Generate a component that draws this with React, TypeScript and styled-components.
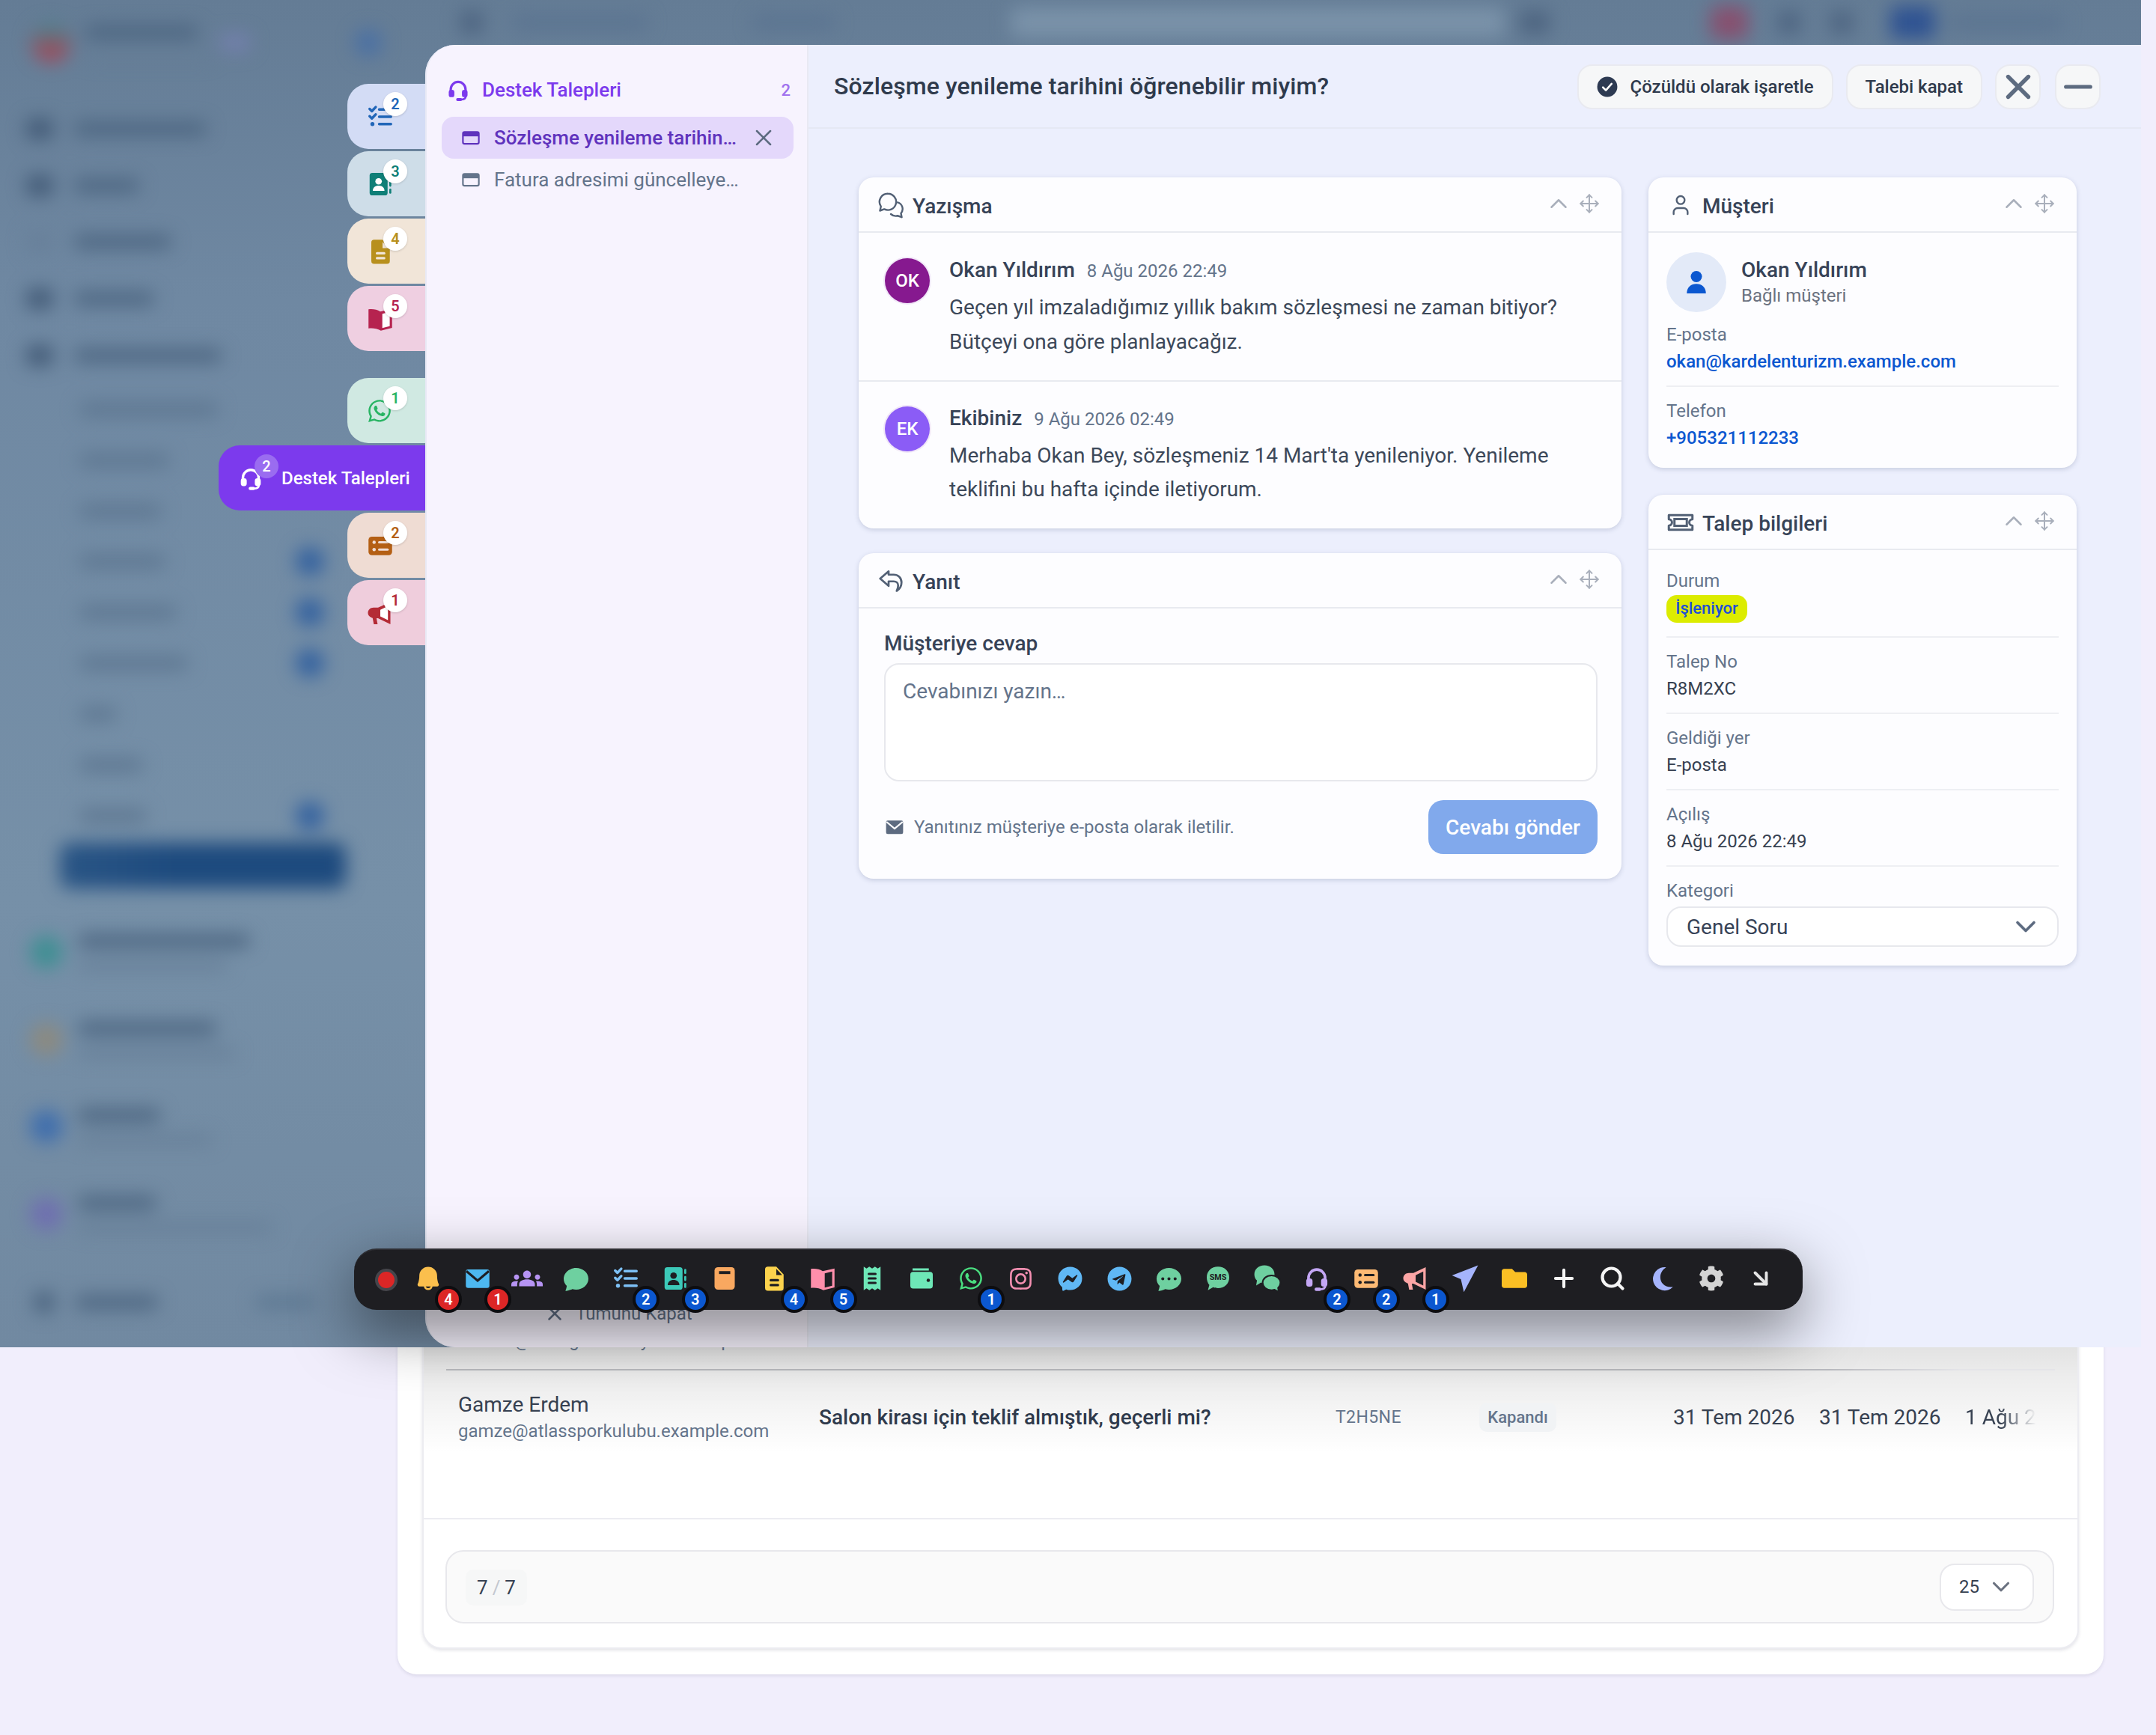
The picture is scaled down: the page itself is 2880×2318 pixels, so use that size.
import React from "react";
import styled, { createGlobalStyle } from "styled-components";
import { ChevronUp, ChevronDown, Move, X, Minus, Plus, Search, ArrowDownRight, User } from "lucide-react";
import { FaWhatsapp, FaInstagram, FaFacebookMessenger, FaTelegram, FaCog, FaFolder } from "react-icons/fa";
import { BsChatFill, BsChatDotsFill } from "react-icons/bs";
import { MdGroups } from "react-icons/md";
import { PiBellFill } from "react-icons/pi";

const GlobalStyle = createGlobalStyle`
  html, body { margin: 0; padding: 0; background: #f1eefc; }
  body { font-family: Roboto, "Liberation Sans", sans-serif; color: #2f3a4c; }
  * { box-sizing: border-box; }
`;

type IconProps = { size?: number; color?: string; cut?: string };

const Svg = ({ size = 36, color = "currentColor", children }: IconProps & { children: React.ReactNode }) => (
  <svg width={size} height={size} viewBox="0 0 24 24" fill={color} style={{ display: "block", flex: "none" }}>
    {children}
  </svg>
);

const HeadsetIcon = ({ size, color = "currentColor" }: IconProps) => (
  <Svg size={size} color={color}>
    <path d="M4.6 14v-2.5a7.4 7.4 0 0 1 14.8 0V14" fill="none" stroke={color} strokeWidth="2.4" />
    <rect x="2.6" y="12" width="5.6" height="7.4" rx="2.4" />
    <rect x="15.8" y="12" width="5.6" height="7.4" rx="2.4" />
    <path d="M19.6 18.5c0 2.4-2 3.2-5 3.2" fill="none" stroke={color} strokeWidth="1.9" />
    <rect x="10" y="20.2" width="6" height="3" rx="1.5" />
  </Svg>
);

const ChecklistIcon = ({ size, color = "currentColor" }: IconProps) => (
  <Svg size={size} color={color}>
    <g fill="none" stroke={color} strokeWidth="2.3" strokeLinecap="round" strokeLinejoin="round">
      <path d="M11 5.5h10.5M11 12h10.5M11 18.5h10.5" />
      <path d="M2.5 5l2 2 3.4-3.6M2.5 11.5l2 2 3.4-3.6" />
    </g>
    <circle cx="5" cy="18.5" r="1.8" />
  </Svg>
);

const ContactsIcon = ({ size, color = "currentColor", cut = "#fff" }: IconProps) => (
  <Svg size={size} color={color}>
    <rect x="2.5" y="2" width="16" height="20" rx="2.4" />
    <rect x="20" y="3.5" width="1.8" height="4.5" rx=".9" />
    <rect x="20" y="9.8" width="1.8" height="4.5" rx=".9" />
    <rect x="20" y="16" width="1.8" height="4.5" rx=".9" />
    <circle cx="10.5" cy="9.5" r="2.9" fill={cut} />
    <path d="M5.3 18c0-3 2.3-4.6 5.2-4.6s5.2 1.6 5.2 4.6z" fill={cut} />
  </Svg>
);

const BoxIcon = ({ size, color = "currentColor", cut = "#fff" }: IconProps) => (
  <Svg size={size} color={color}>
    <rect x="3" y="2" width="18" height="20" rx="3" />
    <rect x="7" y="5.5" width="10" height="2.6" fill={cut} />
  </Svg>
);

const DocIcon = ({ size, color = "currentColor", cut = "#fff" }: IconProps) => (
  <Svg size={size} color={color}>
    <path d="M6.5 1.5H14l6.5 7v12a2.500 2.500 0 0 1-2.500 2.500H6.5A2.500 2.500 0 0 1 4 20.500V4a2.500 2.500 0 0 1 2.500-2.500z" />
    <path d="M14 3.500v5.500h5.200z" fill={cut} />
    <rect x="8" y="12.500" width="8.500" height="2.200" rx="1" fill={cut} />
    <rect x="8" y="16.800" width="8.500" height="2.200" rx="1" fill={cut} />
  </Svg>
);

const BookIcon = ({ size, color = "currentColor", cut = "#fff" }: IconProps) => (
  <Svg size={size} color={color}>
    <path d="M1.500 3.500C5 3 9 3.500 12 5.500l10.500-2.300V20L12.500 22.500C9 20.500 5 20 1.500 20.500z" />
    <path d="M13.800 7.500l6.600-1.600v12.600l-6.600 1.700z" fill={cut} />
  </Svg>
);

const ReceiptIcon = ({ size, color = "currentColor", cut = "#fff" }: IconProps) => (
  <Svg size={size} color={color}>
    <path d="M4.500 1.500l2.500 1.700 2.500-1.700 2.500 1.700 2.500-1.700 2.500 1.700 2.500-1.700v21l-2.500-1.700-2.500 1.700-2.500-1.700-2.500 1.700L7 20.800l-2.500 1.700z" />
    <rect x="8" y="7" width="8" height="2" rx="1" fill={cut} />
    <rect x="8" y="11" width="8" height="2" rx="1" fill={cut} />
    <rect x="8" y="15" width="8" height="2" rx="1" fill={cut} />
  </Svg>
);

const WalletIcon = ({ size, color = "currentColor", cut = "#fff" }: IconProps) => (
  <Svg size={size} color={color}>
    <path d="M4 3h14.500v2H4z" />
    <rect x="2" y="6.200" width="20" height="14.800" rx="2.500" />
    <circle cx="18" cy="13.600" r="1.500" fill={cut} />
  </Svg>
);

const MailIcon = ({ size, color = "currentColor", cut = "#fff" }: IconProps) => (
  <Svg size={size} color={color}>
    <rect x="1.500" y="4" width="21" height="16.500" rx="2" />
    <path d="M2 5.500l10 8.500 10-8.500" fill="none" stroke={cut} strokeWidth="2" />
  </Svg>
);

const SmsIcon = ({ size, color = "currentColor", cut = "#fff" }: IconProps) => (
  <Svg size={size} color={color}>
    <path d="M12 1.500c5.800 0 10 4 10 9.600s-4.200 9.600-10 9.600c-1.500 0-3-.3-4.300-.8L3 22.500l1.300-4.600C2.900 16 2 13.700 2 11.100 2 5.500 6.200 1.500 12 1.500z" />
    <text x="12" y="13.600" textAnchor="middle" fontSize="7.200" fontWeight="700" fontFamily="Roboto, sans-serif" fill={cut}>SMS</text>
  </Svg>
);

const ChatsIcon = ({ size, color = "currentColor", cut = "#fff" }: IconProps) => (
  <Svg size={size} color={color}>
    <path d="M9.500 1C14.500 1 18 4.200 18 8.500S14.500 16 9.500 16c-1 0-2-.1-2.900-.5L2.500 18l.7-4.200C1.800 12.500 1 10.600 1 8.500 1 4.200 4.500 1 9.500 1z" />
    <path d="M15.500 9.500c4.300 0 7.500 2.700 7.500 6.200 0 1.800-.8 3.300-2 4.400l.7 3.400-3.700-2c-.8.200-1.600.4-2.500.4-4.300 0-7.500-2.700-7.500-6.200s3.200-6.200 7.500-6.200z" stroke={cut} strokeWidth="1.300" />
  </Svg>
);

const ListCardIcon = ({ size, color = "currentColor", cut = "#fff" }: IconProps) => (
  <Svg size={size} color={color}>
    <rect x="1.500" y="4" width="21" height="16.500" rx="3" />
    <circle cx="6.500" cy="9" r="1.500" fill={cut} />
    <circle cx="6.500" cy="15.500" r="1.500" fill={cut} />
    <rect x="10" y="8" width="9.500" height="2" rx="1" fill={cut} />
    <rect x="10" y="14.500" width="9.500" height="2" rx="1" fill={cut} />
  </Svg>
);

const MegaphoneIcon = ({ size, color = "currentColor", cut = "#fff" }: IconProps) => (
  <Svg size={size} color={color}>
    <path d="M10 7.200L21 2v20l-11-5.300H8.600L9.600 22H6.200l-1-5.500C2.800 15.800 1 14.200 1 11.900c0-2.800 2.300-4.700 5-4.700z" />
    <path d="M12 9.200l6.800-3.400v12.600L12 15z" fill={cut} />
  </Svg>
);

const SendIcon = ({ size, color = "currentColor" }: IconProps) => (
  <Svg size={size} color={color}>
    <path d="M23 1L1 9.500l7.500 3.200L11 23.500z" />
  </Svg>
);

const MoonIcon = ({ size, color = "currentColor" }: IconProps) => (
  <Svg size={size} color={color}>
    <path d="M16 1.500A11 11 0 1 0 22.500 20C15 21 10.500 16.500 10.500 11c0-4 2-7.500 5.500-9.500z" />
  </Svg>
);

const WindowIcon = ({ color = "currentColor" }: IconProps) => (
  <Svg size={26} color={color}>
    <rect x="2.200" y="5" width="19.600" height="14.500" rx="2" fill="none" stroke={color} strokeWidth="2" />
    <rect x="2.200" y="5.500" width="19.600" height="4.800" />
  </Svg>
);

const CheckCircleIcon = () => (
  <Svg size={28} color="#2d3a52">
    <circle cx="12" cy="12" r="11.500" />
    <path d="M7 12.500l3.400 3.500L17 8.500" fill="none" stroke="#fff" strokeWidth="2.200" strokeLinecap="round" strokeLinejoin="round" />
  </Svg>
);

const PersonFillIcon = () => (
  <Svg size={36} color="#0b57d0">
    <circle cx="12" cy="7" r="5" />
    <path d="M3.500 22c0-5.500 3.800-8.500 8.500-8.500s8.500 3 8.500 8.500z" />
  </Svg>
);

const TicketOutlineIcon = () => (
  <Svg size={36} color="#526075">
    <g fill="none" stroke="#526075" strokeWidth="2">
      <path d="M1.500 5.500h21v3.700a2.800 2.800 0 0 0 0 5.600v3.700h-21v-3.700a2.800 2.800 0 0 0 0-5.600z" strokeLinejoin="round" />
      <rect x="6.500" y="9" width="11" height="6" />
    </g>
  </Svg>
);

const ChatsOutlineIcon = () => (
  <Svg size={36} color="#526075">
    <g fill="none" stroke="#526075" strokeWidth="1.600" strokeLinejoin="round" strokeLinecap="round">
      <path d="M9.500 1.800a7.300 7.300 0 1 1-3.400 13.800L2.300 17l.9-3.800A7.300 7.300 0 0 1 9.500 1.800z" />
      <path d="M18 9.600a6 6 0 0 1 3 9.700l.7 3.500-3.700-1.300a6.500 6.500 0 0 1-6-1.500" />
    </g>
  </Svg>
);

const ReplyOutlineIcon = () => (
  <Svg size={36} color="#526075">
    <path
      d="M10 3.500L2.500 10l7.500 6.500v-4h4.500c2.500 0 4 1.500 4 3.700 0 1.300-.4 3-1.300 4.800 3.300-2 4.300-5 4.300-7.500 0-4.500-3.200-7-7-7H10z"
      fill="none"
      stroke="#526075"
      strokeWidth="1.800"
      strokeLinejoin="round"
    />
  </Svg>
);

/* page under the modal */
const Page = styled.div`
  position: relative;
  width: 2880px;
  height: 2318px;
  overflow: hidden;
  background: #f1eefc;
  display: flex;
  flex-direction: column;
  justify-content: flex-end;
  padding: 0 70px 81px 531px;
`;

const OuterCard = styled.section`
  background: #fff;
  border-radius: 0 0 26px 26px;
  padding: 0 33px 34px;
  box-shadow: 0 2px 4px rgba(60, 60, 90, 0.12);
`;

const InnerCard = styled.div`
  background: #fff;
  border: 2px solid #ececf1;
  border-top: 0;
  border-radius: 0 0 26px 26px;
  padding-bottom: 32px;
  box-shadow: 0 2px 4px rgba(60, 60, 90, 0.14);
`;

const TableArea = styled.div`
  background: linear-gradient(180deg, rgba(0, 0, 0, 0.14) 0, rgba(0, 0, 0, 0.07) 70px, rgba(0, 0, 0, 0) 170px);
  border-bottom: 2px solid #ececf1;
`;

const PrevRow = styled.div`
  height: 60px;
  margin: 0 30px;
  padding: 6px 17px 0;
  border-bottom: 2px solid;
  border-image: linear-gradient(90deg, #b9babf 0, #b9babf 86%, #e4e4e8 94%) 1;
  font-size: 24px;
  line-height: 28px;
  color: #64748b;
`;

const TicketRow = styled.div`
  height: 197px;
  padding-left: 46px;
  padding-bottom: 72px;
  display: grid;
  grid-template-columns: 482px 690px 192px 259px 195px 195px 95px;
  align-items: center;
`;

const CustomerCell = styled.div`
  display: flex;
  flex-direction: column;
  gap: 2px;
`;

const CustomerName = styled.span`
  font-size: 28px;
  line-height: 34px;
  color: #374151;
`;

const CustomerMail = styled.span`
  font-size: 24px;
  line-height: 32px;
  color: #64748b;
`;

const SubjectCell = styled.span`
  font-size: 28px;
  font-weight: 500;
  color: #2f3a4c;
`;

const CodeCell = styled.span`
  font-size: 23px;
  letter-spacing: 0.4px;
  color: #64748b;
`;

const ClosedPill = styled.span`
  justify-self: start;
  padding: 0 10px;
  height: 39px;
  width: 103px;
  display: flex;
  align-items: center;
  justify-content: center;
  background: #f1f3f5;
  border-radius: 10px;
  font-size: 22px;
  font-weight: 500;
  color: #64748b;
`;

const DateCell = styled.span<{ $fade?: boolean }>`
  font-size: 28px;
  color: #374151;
  white-space: nowrap;
  overflow: hidden;
  ${(p) => p.$fade && "mask-image: linear-gradient(90deg, #000 50%, transparent 100%);"}
`;

const PagerBar = styled.div`
  margin: 41px 31px 0 29px;
  height: 98px;
  padding: 2px 25px 0 25px;
  background: #fafafa;
  border: 2px solid #e8e8ec;
  border-radius: 24px;
  display: flex;
  align-items: center;
  justify-content: space-between;
`;

const PageCount = styled.div`
  height: 48px;
  width: 82px;
  background: #f6f7f7;
  border-radius: 10px;
  display: flex;
  align-items: center;
  justify-content: center;
  gap: 6px;
  font-size: 26px;
  color: #374151;
`;

const PageSep = styled.span`
  color: #c3c7cf;
`;

const PageSize = styled.div`
  width: 126px;
  height: 63px;
  margin-top: -2px;
  background: #fff;
  border: 2px solid #e8e8ec;
  border-radius: 20px;
  display: flex;
  align-items: center;
  gap: 10px;
  padding-left: 24px;
  font-size: 24px;
  color: #374151;
  svg { color: #6b7280; }
`;

/* blurred backdrop */
const Overlay = styled.div`
  position: absolute;
  left: 0;
  top: 0;
  width: 2860px;
  height: 1800px;
  overflow: hidden;
  background: linear-gradient(180deg, #647c95 0, #6f88a2 400px, #7690a8 1200px, #7189a1 1800px);
`;

const BlurLayer = styled.div`
  position: absolute;
  inset: 0;
  filter: blur(12px);
  display: flex;
`;

const BlurSidebar = styled.div`
  width: 500px;
  flex: none;
  padding: 22px 30px 0 0;
  display: flex;
  flex-direction: column;
`;

const BlurRow = styled.div<{ $h: number; $top?: number; $indent?: number }>`
  height: ${(p) => p.$h}px;
  margin-top: ${(p) => p.$top ?? 0}px;
  padding-left: ${(p) => p.$indent ?? 35}px;
  display: flex;
  align-items: center;
  position: relative;
`;

const BlurBar = styled.div<{ $w: number; $ml?: number; $c?: string; $h?: number }>`
  width: ${(p) => p.$w}px;
  height: ${(p) => p.$h ?? 18}px;
  margin-left: ${(p) => p.$ml ?? 0}px;
  border-radius: 8px;
  background: ${(p) => p.$c ?? "#4c6580"};
  flex: none;
`;

const BlurDot = styled.div<{ $s: number; $c: string; $ml?: number }>`
  width: ${(p) => p.$s}px;
  height: ${(p) => p.$s}px;
  margin-left: ${(p) => p.$ml ?? 0}px;
  border-radius: 50%;
  background: ${(p) => p.$c};
  flex: none;
`;

const BlurLines = styled.div`
  display: flex;
  flex-direction: column;
  gap: 18px;
  margin-left: 20px;
`;

const ActiveBar = styled.div`
  height: 62px;
  width: 382px;
  margin: 2px 0 0 80px;
  border-radius: 14px;
  background: linear-gradient(90deg, #2a5585 0, #1d4a7e 40%);
`;

const BlurTop = styled.div`
  flex: 1;
  height: 60px;
  display: flex;
  align-items: center;
`;

/* modal */
const Modal = styled.div`
  position: absolute;
  left: 568px;
  top: 60px;
  width: 2292px;
  height: 1740px;
  border-radius: 40px 0 0 40px;
  display: flex;
  background: #eceffd;
`;

const TabStack = styled.nav`
  position: absolute;
  right: 100%;
  top: 52px;
  display: flex;
  flex-direction: column;
  align-items: flex-end;
`;

const SideTab = styled.div<{ $bg: string; $fg: string; $gap?: boolean }>`
  position: relative;
  width: 104px;
  height: 87px;
  margin-bottom: ${(p) => (p.$gap ? 36 : 3)}px;
  padding-left: 26px;
  border-radius: 28px 0 0 28px;
  background: ${(p) => p.$bg};
  color: ${(p) => p.$fg};
  display: flex;
  align-items: center;
`;

const TabBadge = styled.span`
  position: absolute;
  left: 48px;
  top: 11px;
  width: 32px;
  height: 32px;
  border-radius: 50%;
  background: #fff;
  box-shadow: 0 1px 3px rgba(0, 0, 0, 0.15);
  display: flex;
  align-items: center;
  justify-content: center;
  font-size: 20px;
  font-weight: 600;
  color: inherit;
`;

const ActiveTab = styled.div`
  position: relative;
  width: 276px;
  height: 87px;
  margin-bottom: 3px;
  padding-left: 26px;
  border-radius: 28px 0 0 28px;
  background: #7c3aed;
  color: #fff;
  display: flex;
  align-items: center;
  gap: 24px;
  font-size: 24px;
  font-weight: 500;
  white-space: nowrap;
`;

const ActiveBadge = styled.span`
  position: absolute;
  left: 48px;
  top: 12px;
  width: 32px;
  height: 32px;
  border-radius: 50%;
  background: #9a6cf0;
  display: flex;
  align-items: center;
  justify-content: center;
  font-size: 20px;
  font-weight: 500;
`;

const LeftPane = styled.aside`
  width: 512px;
  flex: none;
  background: #f7f3fe;
  border-left: 2px solid #e8e9f5;
  border-right: 2px solid #e9e9f3;
  border-radius: 40px 0 0 40px;
  padding: 42px 18px 30px 20px;
  display: flex;
  flex-direction: column;
`;

const PaneHeader = styled.div`
  display: flex;
  align-items: center;
  padding: 0 4px 0 6px;
  height: 32px;
  margin-top: 2px;
  margin-bottom: 20px;
  color: #7c3aed;
  font-size: 26px;
  font-weight: 500;
  gap: 16px;
`;

const PaneCount = styled.span`
  margin-left: auto;
  font-size: 22px;
  color: #a071ee;
`;

const PaneItem = styled.div<{ $active?: boolean }>`
  height: 56px;
  display: flex;
  align-items: center;
  gap: 18px;
  padding: 0 22px 0 26px;
  border-radius: 16px;
  font-size: 26px;
  white-space: nowrap;
  background: ${(p) => (p.$active ? "#e4d8fb" : "transparent")};
  color: ${(p) => (p.$active ? "#5f33bd" : "#64748b")};
  font-weight: ${(p) => (p.$active ? 500 : 400)};
`;

const CloseMark = styled.span`
  margin-left: auto;
  color: #5d6b80;
  display: flex;
`;

const CloseAll = styled.div`
  margin-top: auto;
  display: flex;
  align-items: center;
  gap: 13px;
  padding-left: 136px;
  font-size: 24px;
  color: #64748b;
`;

const RightPane = styled.main`
  flex: 1;
  display: flex;
  flex-direction: column;
`;

const TopBar = styled.header`
  height: 112px;
  flex: none;
  border-bottom: 2px solid #e5e8f4;
  padding: 26px 54px 0 34px;
  display: flex;
  align-items: flex-start;
  gap: 17px;
`;

const TicketTitle = styled.h1`
  margin: 0 auto 0 0;
  font-size: 32px;
  line-height: 58px;
  font-weight: 500;
  letter-spacing: 0.1px;
  color: #2f3a4c;
`;

const TopButton = styled.button<{ $square?: boolean; $end?: number }>`
  height: 60px;
  width: ${(p) => (p.$square ? "61px" : "auto")};
  margin-right: ${(p) => p.$end ?? 0}px;
  padding: ${(p) => (p.$square ? 0 : "0 24px")};
  background: #f6f7f8;
  border: 2px solid #e9eaf0;
  border-radius: 20px;
  font: 500 24px Roboto, sans-serif;
  color: #2f3a4c;
  display: flex;
  align-items: center;
  justify-content: center;
  gap: 16px;
  svg.tool { color: #5d6b80; flex: none; }
`;

const Columns = styled.div`
  padding: 65px 0 0 67px;
  display: grid;
  grid-template-columns: 1019px 572px;
  gap: 36px;
  align-items: start;
`;

const Stack = styled.div<{ $gap: number }>`
  display: flex;
  flex-direction: column;
  gap: ${(p) => p.$gap}px;
`;

const Card = styled.section`
  background: #fdfdff;
  border-radius: 20px;
  box-shadow: 0 2px 6px rgba(70, 80, 120, 0.22);
`;

const CardHead = styled.div`
  height: 74px;
  padding: 4px 29px 0 26px;
  border-bottom: 2px solid #e8eaf0;
  display: flex;
  align-items: center;
  gap: 12px;
  font-size: 28px;
  font-weight: 500;
  color: #374357;
`;

const HeadIcon = styled.span`
  width: 34px;
  flex: none;
  display: flex;
  justify-content: center;
  margin-top: -2px;
  color: #526075;
`;

const CardTools = styled.span`
  margin-left: auto;
  margin-top: -6px;
  display: flex;
  align-items: center;
  gap: 8px;
  color: #a9afbb;
`;

const Message = styled.article`
  padding: 33px 36px 28px 35px;
  display: flex;
  gap: 26px;
  & + & {
    padding: 32px 36px 30px 35px;
    border-top: 2px solid #e8eaf0;
  }
`;

const Avatar = styled.span<{ $bg: string }>`
  width: 60px;
  height: 60px;
  margin-top: 1px;
  flex: none;
  border-radius: 50%;
  background: ${(p) => p.$bg};
  box-shadow: 0 0 0 2px #f1e7f8;
  color: #fff;
  font-size: 24px;
  font-weight: 500;
  display: flex;
  align-items: center;
  justify-content: center;
`;

const MessageHead = styled.div`
  display: flex;
  align-items: baseline;
  gap: 16px;
  margin-bottom: 9px;
  line-height: 34px;
`;

const Sender = styled.strong`
  font-size: 28px;
  font-weight: 500;
  color: #374357;
`;

const Stamp = styled.span`
  font-size: 24px;
  color: #64748b;
`;

const MessageText = styled.p<{ $lh: number }>`
  margin: 0;
  font-size: 28px;
  line-height: ${(p) => p.$lh}px;
  color: #3c4859;
`;

const ReplyBody = styled.div`
  padding: 30px 32px 33px 34px;
`;

const FieldLabel = styled.label`
  display: block;
  font-size: 28px;
  line-height: 34px;
  font-weight: 500;
  color: #374357;
  margin-bottom: 9px;
`;

const ReplyBox = styled.textarea`
  display: block;
  width: 100%;
  height: 158px;
  resize: none;
  padding: 18px 23px;
  border: 2px solid #e7e8ed;
  border-radius: 20px;
  background: #fff;
  font: 28px/36px Roboto, sans-serif;
  &::placeholder { color: #64748b; opacity: 1; }
`;

const ReplyFoot = styled.div`
  margin-top: 25px;
  display: flex;
  align-items: center;
  gap: 13px;
  font-size: 24px;
  color: #64748b;
  padding-left: 1px;
`;

const SendButton = styled.button`
  margin-left: auto;
  width: 226px;
  height: 72px;
  border: 0;
  border-radius: 20px;
  background: #81a9ec;
  color: #fff;
  font: 500 28px Roboto, sans-serif;
`;

const InfoBody = styled.div`
  padding: 26px 24px 25px;
`;

const PersonRow = styled.div`
  display: flex;
  align-items: center;
  gap: 20px;
  margin-bottom: 15px;
`;

const PersonCircle = styled.span`
  width: 80px;
  height: 80px;
  border-radius: 50%;
  background: #e3eaf8;
  display: flex;
  align-items: center;
  justify-content: center;
`;

const PersonText = styled.div`
  display: flex;
  flex-direction: column;
  gap: 2px;
`;

const PersonName = styled.span`
  font-size: 28px;
  line-height: 34px;
  font-weight: 500;
  color: #374357;
`;

const PersonSub = styled.span`
  font-size: 24px;
  line-height: 30px;
  color: #6b7280;
`;

const Field = styled.div<{ $first?: boolean; $last?: boolean }>`
  padding: ${(p) => (p.$first ? 0 : "17px")} 0 ${(p) => (p.$last ? 0 : "17px")};
  & + & { border-top: 2px solid #eeeff3; }
`;

const Label = styled.div`
  font-size: 24px;
  line-height: 30px;
  color: #64748b;
  margin-bottom: 6px;
`;

const Value = styled.div`
  font-size: 24px;
  line-height: 30px;
  color: #374151;
`;

const LinkValue = styled.a`
  display: block;
  font-size: 24px;
  line-height: 30px;
  font-weight: 500;
  color: #0b57d0;
`;

const StatusPill = styled.span`
  display: flex;
  align-items: center;
  justify-content: center;
  width: 108px;
  height: 37px;
  padding-bottom: 3px;
  margin-top: -2px;
  margin-bottom: 1px;
  border-radius: 14px;
  background: #dcec00;
  color: #1d4ed8;
  font-size: 22px;
  font-weight: 500;
`;

const CategorySelect = styled.div`
  height: 54px;
  border: 2px solid #e7e8ed;
  border-radius: 20px;
  background: #fff;
  padding: 0 20px 0 25px;
  display: flex;
  align-items: center;
  justify-content: space-between;
  font-size: 28px;
  color: #374357;
  svg { color: #5d6b80; }
`;

/* dock */
const Dock = styled.div`
  position: absolute;
  left: 473px;
  top: 1668px;
  height: 82px;
  padding: 0 23px 0 20px;
  border-radius: 30px;
  background: #1e1e22;
  border-top: 2px solid #2e2e33;
  box-shadow: 0 26px 80px rgba(0, 0, 0, 0.5);
  display: flex;
  align-items: center;
`;

const RecordSlot = styled.div`
  width: 46px;
  display: flex;
  justify-content: center;
`;

const RecordDot = styled.span`
  width: 30px;
  height: 30px;
  border-radius: 50%;
  background: #dc2626;
  border: 4px solid #45454b;
`;

const DockItem = styled.div<{ $c: string }>`
  position: relative;
  width: 65.94px;
  height: 82px;
  margin-top: -4px;
  display: flex;
  align-items: center;
  justify-content: center;
  color: ${(p) => p.$c};
`;

const DockBadge = styled.span<{ $red?: boolean }>`
  position: absolute;
  left: 42px;
  top: 51px;
  width: 36px;
  height: 36px;
  border-radius: 50%;
  border: 4px solid #0d0d10;
  background: ${(p) => (p.$red ? "#dc2626" : "#0b57d0")};
  color: #fff;
  font-size: 20px;
  font-weight: 600;
  display: flex;
  align-items: center;
  justify-content: center;
`;

const DOCK_CUT = "#1e1e22";

const dockItems: { c: string; icon: React.ReactNode; badge?: number; red?: boolean }[] = [
  { c: "#fbbf4d", icon: <PiBellFill size={38} />, badge: 4, red: true },
  { c: "#4db8f0", icon: <MailIcon size={36} cut={DOCK_CUT} />, badge: 1, red: true },
  { c: "#b794f4", icon: <MdGroups size={42} /> },
  { c: "#6ed0a0", icon: <BsChatFill size={33} /> },
  { c: "#7dc0f5", icon: <ChecklistIcon size={36} />, badge: 2 },
  { c: "#3cc9b8", icon: <ContactsIcon size={36} cut={DOCK_CUT} />, badge: 3 },
  { c: "#f9a860", icon: <BoxIcon size={36} cut={DOCK_CUT} /> },
  { c: "#fcd34d", icon: <DocIcon size={36} cut={DOCK_CUT} />, badge: 4 },
  { c: "#ff8fab", icon: <BookIcon size={36} cut={DOCK_CUT} />, badge: 5 },
  { c: "#6ee7b7", icon: <ReceiptIcon size={36} cut={DOCK_CUT} /> },
  { c: "#6ee7b7", icon: <WalletIcon size={36} cut={DOCK_CUT} /> },
  { c: "#4ade80", icon: <FaWhatsapp size={34} />, badge: 1 },
  { c: "#f48fb1", icon: <FaInstagram size={33} /> },
  { c: "#60b8f5", icon: <FaFacebookMessenger size={33} /> },
  { c: "#60b8f5", icon: <FaTelegram size={33} /> },
  { c: "#6ed0a0", icon: <BsChatDotsFill size={33} /> },
  { c: "#6ed0a0", icon: <SmsIcon size={36} cut={DOCK_CUT} /> },
  { c: "#6ed0a0", icon: <ChatsIcon size={38} cut={DOCK_CUT} /> },
  { c: "#c4a7f5", icon: <HeadsetIcon size={36} />, badge: 2 },
  { c: "#fdba74", icon: <ListCardIcon size={36} cut={DOCK_CUT} />, badge: 2 },
  { c: "#fca5a5", icon: <MegaphoneIcon size={36} cut={DOCK_CUT} />, badge: 1 },
  { c: "#a5b4fc", icon: <SendIcon size={38} /> },
  { c: "#fbbf24", icon: <FaFolder size={34} /> },
  { c: "#f5f5f5", icon: <Plus size={38} strokeWidth={2.6} /> },
  { c: "#f5f5f5", icon: <Search size={36} strokeWidth={2.8} /> },
  { c: "#a5b4fc", icon: <MoonIcon size={34} /> },
  { c: "#d4d4d4", icon: <FaCog size={34} /> },
  { c: "#e5e5e5", icon: <ArrowDownRight size={36} strokeWidth={2.6} /> },
];

const sideTabs = [
  { bg: "#d3dcf5", fg: "#2166b8", n: 2, icon: <ChecklistIcon size={36} /> },
  { bg: "#cedde8", fg: "#0f7f77", n: 3, icon: <ContactsIcon size={36} /> },
  { bg: "#f1e5d8", fg: "#b8901d", n: 4, icon: <DocIcon size={36} cut="#f1e5d8" /> },
  { bg: "#efcfe1", fg: "#b6234f", n: 5, icon: <BookIcon size={36} /> },
  { bg: "#d0e9e2", fg: "#28b463", n: 1, icon: <FaWhatsapp size={34} /> },
];

const sideTabsAfter = [
  { bg: "#efdcd3", fg: "#b45f14", n: 2, icon: <ListCardIcon size={36} cut="#efdcd3" /> },
  { bg: "#efcddc", fg: "#b42b36", n: 1, icon: <MegaphoneIcon size={36} cut="#fff" /> },
];

const navWidths = [177, 87, 130, 107, 197];
const subWidths = [185, 120, 110, 115, 130, 145, 50, 85, 90];
const subDots = [false, false, false, true, true, true, false, false, true];
const convos = [
  { c: "#3f8f93", a: 230, b: 200 },
  { c: "#8c8a80", a: 185, b: 210 },
  { c: "#3f6ead", a: 110, b: 180 },
  { c: "#6f6fb0", a: 105, b: 260 },
];

const Tools = () => (
  <CardTools>
    <ChevronUp size={38} strokeWidth={1.6} />
    <Move size={28} strokeWidth={1.7} />
  </CardTools>
);

const BlurredBackdrop = () => (
  <BlurLayer>
    <BlurSidebar>
      <BlurRow $h={70} $indent={42}>
        <BlurDot $s={52} $c="linear-gradient(180deg, #3f8a93 0, #a04a5a 75%)" />
        <BlurLines>
          <BlurBar $w={150} />
          <BlurBar $w={170} $c="#657d96" $h={10} />
        </BlurLines>
        <BlurBar $w={40} $c="#7480ae" $ml={10} $h={22} />
        <BlurDot $s={36} $c="#4a70a4" $ml={140} />
      </BlurRow>
      {navWidths.map((w, i) => (
        <BlurRow key={i} $h={76} $top={i === 0 ? 42 : 0}>
          <BlurBar $w={36} $h={28} $c={i === 2 ? "#68809a" : "#445c78"} />
          <BlurBar $w={w} $ml={28} />
        </BlurRow>
      ))}
      {subWidths.map((w, i) => (
        <BlurRow key={i} $h={68} $indent={106}>
          <BlurBar $w={w} $c="#5d7690" />
          {subDots[i] && <BlurDot $s={38} $c="#33619f" $ml={289 - w} />}
        </BlurRow>
      ))}
      <ActiveBar />
      {convos.map((c, i) => (
        <BlurRow key={i} $h={117} $top={i === 0 ? 26 : 0} $indent={40}>
          <BlurDot $s={44} $c={c.c} />
          <BlurLines>
            <BlurBar $w={c.a} />
            <BlurBar $w={c.b} $c="#657d96" $h={12} />
          </BlurLines>
        </BlurRow>
      ))}
      <BlurRow $h={120} $indent={45}>
        <BlurBar $w={28} $h={28} $c="#4c6580" />
        <BlurBar $w={110} $ml={28} />
        <BlurBar $w={80} $ml={130} $c="#5d7892" />
      </BlurRow>
    </BlurSidebar>
    <BlurTop>
      <BlurBar $w={30} $ml={115} $h={30} $c="#4d6480" />
      <BlurBar $w={180} $ml={40} $c="#5a7390" />
      <BlurBar $w={110} $ml={140} $c="#5a7390" />
      <BlurBar $w={660} $ml={235} $h={40} $c="#7a92a9" />
      <BlurBar $w={40} $ml={20} $h={30} $c="#4d6480" />
      <BlurBar $w={50} $ml={215} $h={44} $c="#87506f" />
      <BlurBar $w={30} $ml={40} $h={30} $c="#4d6480" />
      <BlurBar $w={30} $ml={40} $h={30} $c="#4d6480" />
      <BlurBar $w={60} $ml={50} $h={44} $c="#2f5392" />
      <BlurBar $w={150} $ml={20} $c="#5a7390" />
    </BlurTop>
  </BlurLayer>
);

export default function App() {
  return (
    <>
      <GlobalStyle />
      <Page>
        <OuterCard>
          <InnerCard>
            <TableArea>
              <PrevRow>nermin@mavigezisanayiler.example.com</PrevRow>
              <TicketRow>
                <CustomerCell>
                  <CustomerName>Gamze Erdem</CustomerName>
                  <CustomerMail>gamze@atlassporkulubu.example.com</CustomerMail>
                </CustomerCell>
                <SubjectCell>Salon kirası için teklif almıştık, geçerli mi?</SubjectCell>
                <CodeCell>T2H5NE</CodeCell>
                <ClosedPill>Kapandı</ClosedPill>
                <DateCell>31 Tem 2026</DateCell>
                <DateCell>31 Tem 2026</DateCell>
                <DateCell $fade>1 Ağu 2026</DateCell>
              </TicketRow>
            </TableArea>
            <PagerBar>
              <PageCount>
                7 <PageSep>/</PageSep> 7
              </PageCount>
              <PageSize>
                25 <ChevronDown size={38} strokeWidth={2} />
              </PageSize>
            </PagerBar>
          </InnerCard>
        </OuterCard>

        <Overlay>
          <BlurredBackdrop />
          <Modal>
            <TabStack>
              {sideTabs.map((t, i) => (
                <SideTab key={i} $bg={t.bg} $fg={t.fg} $gap={i === 3}>
                  {t.icon}
                  <TabBadge>{t.n}</TabBadge>
                </SideTab>
              ))}
              <ActiveTab>
                <HeadsetIcon size={34} />
                <ActiveBadge>2</ActiveBadge>
                Destek Talepleri
              </ActiveTab>
              {sideTabsAfter.map((t, i) => (
                <SideTab key={i} $bg={t.bg} $fg={t.fg}>
                  {t.icon}
                  <TabBadge>{t.n}</TabBadge>
                </SideTab>
              ))}
            </TabStack>

            <LeftPane>
              <PaneHeader>
                <HeadsetIcon size={32} />
                Destek Talepleri
                <PaneCount>2</PaneCount>
              </PaneHeader>
              <PaneItem $active>
                <WindowIcon />
                Sözleşme yenileme tarihin…
                <CloseMark>
                  <X size={36} strokeWidth={1.7} />
                </CloseMark>
              </PaneItem>
              <PaneItem>
                <WindowIcon />
                Fatura adresimi güncelleye…
              </PaneItem>
              <CloseAll>
                <X size={30} strokeWidth={2} />
                Tümünü Kapat
              </CloseAll>
            </LeftPane>

            <RightPane>
              <TopBar>
                <TicketTitle>Sözleşme yenileme tarihini öğrenebilir miyim?</TicketTitle>
                <TopButton>
                  <CheckCircleIcon />
                  Çözüldü olarak işaretle
                </TopButton>
                <TopButton>Talebi kapat</TopButton>
                <TopButton $square $end={2}>
                  <X className="tool" size={54} strokeWidth={2.4} />
                </TopButton>
                <TopButton $square>
                  <Minus className="tool" size={56} strokeWidth={2.2} />
                </TopButton>
              </TopBar>

              <Columns>
                <Stack $gap={33}>
                  <Card>
                    <CardHead>
                      <HeadIcon>
                        <ChatsOutlineIcon />
                      </HeadIcon>
                      Yazışma
                      <Tools />
                    </CardHead>
                    <Message>
                      <Avatar $bg="#86198f">OK</Avatar>
                      <div>
                        <MessageHead>
                          <Sender>Okan Yıldırım</Sender>
                          <Stamp>8 Ağu 2026 22:49</Stamp>
                        </MessageHead>
                        <MessageText $lh={46}>
                          Geçen yıl imzaladığımız yıllık bakım sözleşmesi ne zaman bitiyor? Bütçeyi ona göre planlayacağız.
                        </MessageText>
                      </div>
                    </Message>
                    <Message>
                      <Avatar $bg="#8b5cf6">EK</Avatar>
                      <div>
                        <MessageHead>
                          <Sender>Ekibiniz</Sender>
                          <Stamp>9 Ağu 2026 02:49</Stamp>
                        </MessageHead>
                        <MessageText $lh={45}>
                          Merhaba Okan Bey, sözleşmeniz 14 Mart'ta yenileniyor. Yenileme teklifini bu hafta içinde iletiyorum.
                        </MessageText>
                      </div>
                    </Message>
                  </Card>

                  <Card>
                    <CardHead>
                      <HeadIcon>
                        <ReplyOutlineIcon />
                      </HeadIcon>
                      Yanıt
                      <Tools />
                    </CardHead>
                    <ReplyBody>
                      <FieldLabel>Müşteriye cevap</FieldLabel>
                      <ReplyBox placeholder="Cevabınızı yazın…" />
                      <ReplyFoot>
                        <MailIcon size={26} color="#5d6b80" cut="#fdfdff" />
                        Yanıtınız müşteriye e-posta olarak iletilir.
                        <SendButton>Cevabı gönder</SendButton>
                      </ReplyFoot>
                    </ReplyBody>
                  </Card>
                </Stack>

                <Stack $gap={36}>
                  <Card>
                    <CardHead>
                      <HeadIcon>
                        <User size={32} strokeWidth={1.8} />
                      </HeadIcon>
                      Müşteri
                      <Tools />
                    </CardHead>
                    <InfoBody>
                      <PersonRow>
                        <PersonCircle>
                          <PersonFillIcon />
                        </PersonCircle>
                        <PersonText>
                          <PersonName>Okan Yıldırım</PersonName>
                          <PersonSub>Bağlı müşteri</PersonSub>
                        </PersonText>
                      </PersonRow>
                      <Field $first>
                        <Label>E-posta</Label>
                        <LinkValue>okan@kardelenturizm.example.com</LinkValue>
                      </Field>
                      <Field $last>
                        <Label>Telefon</Label>
                        <LinkValue>+905321112233</LinkValue>
                      </Field>
                    </InfoBody>
                  </Card>

                  <Card>
                    <CardHead>
                      <HeadIcon>
                        <TicketOutlineIcon />
                      </HeadIcon>
                      Talep bilgileri
                      <Tools />
                    </CardHead>
                    <InfoBody>
                      <Field $first>
                        <Label>Durum</Label>
                        <StatusPill>İşleniyor</StatusPill>
                      </Field>
                      <Field>
                        <Label>Talep No</Label>
                        <Value>R8M2XC</Value>
                      </Field>
                      <Field>
                        <Label>Geldiği yer</Label>
                        <Value>E-posta</Value>
                      </Field>
                      <Field>
                        <Label>Açılış</Label>
                        <Value>8 Ağu 2026 22:49</Value>
                      </Field>
                      <Field $last>
                        <Label>Kategori</Label>
                        <CategorySelect>
                          Genel Soru
                          <ChevronDown size={44} strokeWidth={2} />
                        </CategorySelect>
                      </Field>
                    </InfoBody>
                  </Card>
                </Stack>
              </Columns>
            </RightPane>
          </Modal>
        </Overlay>

        <Dock>
          <RecordSlot>
            <RecordDot />
          </RecordSlot>
          {dockItems.map((d, i) => (
            <DockItem key={i} $c={d.c}>
              {d.icon}
              {d.badge && <DockBadge $red={d.red}>{d.badge}</DockBadge>}
            </DockItem>
          ))}
        </Dock>
      </Page>
    </>
  );
}
